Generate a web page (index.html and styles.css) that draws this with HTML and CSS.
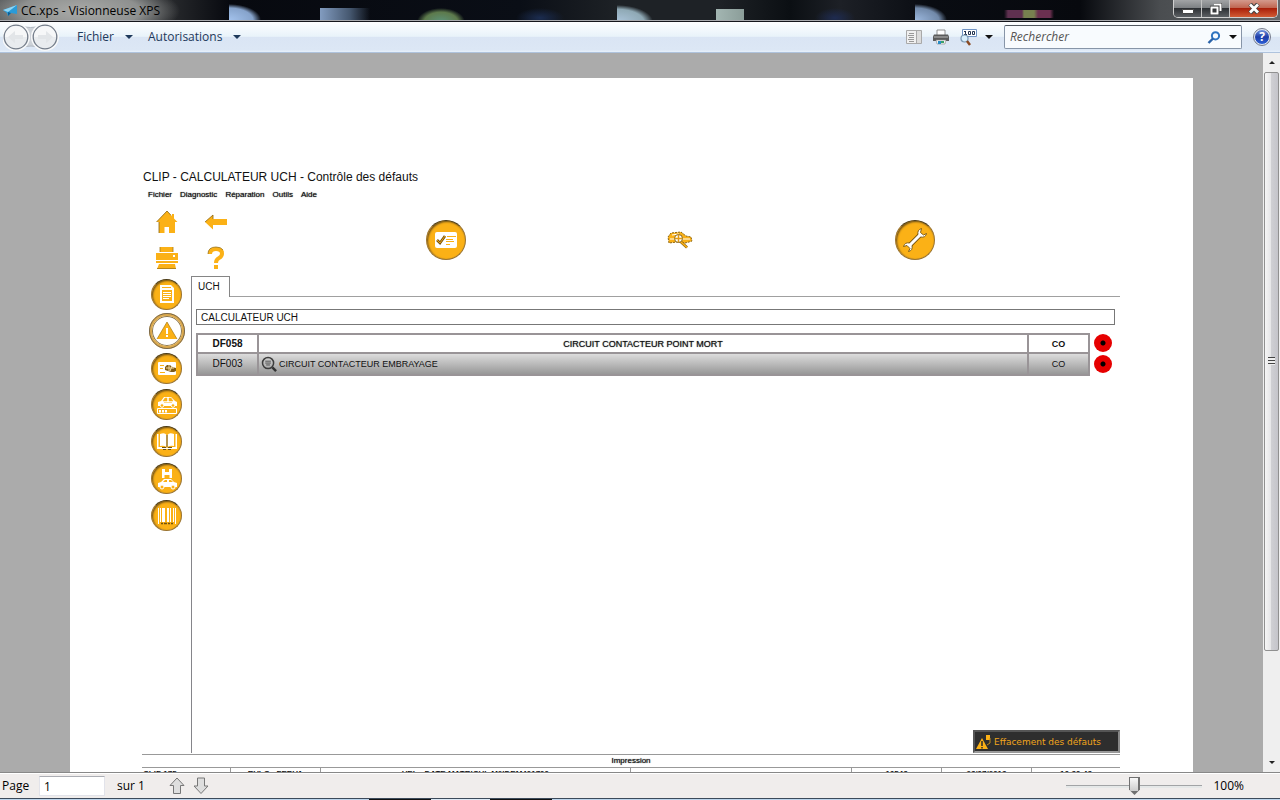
FILE: index.html
```html
<!DOCTYPE html>
<html lang="fr">
<head>
<meta charset="utf-8">
<title>CC.xps - Visionneuse XPS</title>
<link rel="stylesheet" href="styles.css">
</head>
<body>
<div class="window">
  <header class="titlebar">
    <svg class="app-icon" width="14" height="12" viewBox="0 0 14 12"><path d="M0 5 14 0v9L8 8l-3 3-1-3z" fill="#2a9bd8"/><path d="M0 5 14 0 5 7z" fill="#8fd6f5"/><path d="M5 7l3 1-3 3z" fill="#0b5f96"/></svg>
    <h1 class="title">CC.xps - Visionneuse XPS</h1>
    <div class="caption-buttons">
      <button class="cap" aria-label="Réduire"><svg width="12" height="12" viewBox="0 0 12 12"><path d="M.5 6.500h11v4H.5z" fill="#fff" stroke="#444"/></svg></button>
      <button class="cap" aria-label="Restaurer"><svg width="12" height="12" viewBox="0 0 12 12"><path d="M4 1.500h6.500V8M1.500 4.500h6v6h-6z" fill="none" stroke="#333" stroke-width="3.500"/><path d="M4 1.500h6.500V8M1.500 4.500h6v6h-6z" fill="none" stroke="#fff" stroke-width="2"/></svg></button>
      <button class="cap cap-close" aria-label="Fermer"><svg width="12" height="11" viewBox="0 0 12 11"><path d="M2 1l8 9M10 1 2 10" stroke="#444" stroke-width="4.500"/><path d="M2 1.500l8 8M10 1.500l-8 8" stroke="#fff" stroke-width="2.800"/></svg></button>
    </div>
  </header>

  <nav class="toolbar">
    <div class="history">
      <svg width="56" height="28" viewBox="0 0 56 28"><path d="M13 2q14 5 30 0v24q-15-6-30 0z" fill="#cdd2d8" stroke="#b1b8c1"/><g fill="#eceff2" stroke="#f8f9fa" stroke-width="3"><circle cx="13" cy="14" r="12.500"/><circle cx="42" cy="14" r="12.500"/></g><g fill="#e9ecef" stroke="#737c89" stroke-width="1.300"><circle cx="13" cy="14" r="11.800"/><circle cx="42" cy="14" r="11.800"/></g><path d="M2 14a11 11 0 0 1 22 0zM31 14a11 11 0 0 1 22 0z" fill="#f6f7f8"/><path d="M5 14l7-6v4h8v4h-8v4zM50 14l-7-6v4h-8v4h8v4z" fill="#e2e5e8"/></svg>
    </div>
    <button class="menu-btn">Fichier <span class="caret"></span></button>
    <button class="menu-btn">Autorisations <span class="caret"></span></button>
    <div class="tools">
      <button class="tool" aria-label="Plan"><svg width="16" height="16" viewBox="0 0 16 16"><path d="M.5 1.500h15v13H.5z" fill="#f0f0f0" stroke="#a9a9a9"/><path d="M10.500 2v12" stroke="#a9a9a9"/><path d="M11 2h4v12h-4z" fill="#dcdcdc"/><path d="M3 4.500h5M2 6.500h6M3 8.500h5M2 10.500h6M3 12.500h5" stroke="#999"/></svg></button>
      <button class="tool" aria-label="Imprimer"><svg width="16" height="16" viewBox="0 0 16 16"><path d="M4 1h8v6H4z" fill="#fff" stroke="#777" stroke-width=".8"/><path d="M1 5.500h14l1 2V12H0V7.500z" fill="#5b5b5b"/><path d="M1 8h14" stroke="#bcbcbc"/><path d="M3 11h10l-1 4H4z" fill="#f5f5f5" stroke="#888" stroke-width=".6"/><path d="M5 12h3v3H5z" fill="#278dc8"/><path d="M8 12h3v2H8z" fill="#3ba06b"/></svg></button>
      <button class="tool tool-zoom" aria-label="Zoom 100"><svg width="17" height="18" viewBox="0 0 17 18"><path d="M2.500 1.500h14v7h-14z" fill="#fff" stroke="#6f93c4"/><g fill="none" stroke="#24344f"><path d="M5.500 3v4M4 3.500h1M4 6.500h3"/><path d="M8.500 3.500h2v3h-2zM12.500 3.500h2v3h-2z"/></g><circle cx="4.500" cy="10.500" r="3.500" fill="#d6edfb" stroke="#7b99b3" stroke-width="1.200"/><path d="M7 13l3 4" stroke="#8a4a22" stroke-width="2.500"/></svg><span class="caret dark"></span></button>
      <div class="search">
        <input class="search-input" type="text" placeholder="Rechercher" aria-label="Rechercher">
        <button class="tool" aria-label="Lancer la recherche"><svg width="14" height="13" viewBox="0 0 14 13"><circle cx="8.500" cy="4.800" r="3.600" fill="none" stroke="#2f74c0" stroke-width="2"/><path d="M6 7.500 1.500 12" stroke="#2a62a8" stroke-width="2.400"/></svg></button>
        <button class="tool" aria-label="Options de recherche"><span class="caret dark"></span></button>
      </div>
      <button class="help" aria-label="Aide">?</button>
    </div>
  </nav>

  <main class="viewer">
    <div class="canvas">
      <article class="sheet">
        <h2 class="sheet-title">CLIP - CALCULATEUR UCH - Contrôle des défauts</h2>
        <nav class="sheet-menu"><span>Fichier</span><span>Diagnostic</span><span>Réparation</span><span>Outils</span><span>Aide</span></nav>

        <div class="top-row">
          <div class="quick">
            <svg width="24" height="24" viewBox="0 0 24 24"><path d="M12 1 1.500 12H4v11h5.500v-6h4.500v6h6V12h2.500L19 8.500V4h-2v2.300z" fill="#fbb116"/><path d="M1.500 12 12 1l4 4.300M4 12v11" stroke="#8a650e" stroke-width=".8" fill="none"/></svg>
            <svg width="24" height="24" viewBox="0 0 24 24"><path d="M1 12l8-7v4h14v6H9v4.500z" fill="#fbb116"/><path d="M1 12l8-7v4" stroke="#8a650e" stroke-width=".8" fill="none"/></svg>
            <svg width="24" height="24" viewBox="0 0 24 24"><path d="M5 1h13v5H5zM1 7h22v10H1zM4 18h16l1 5H2z" fill="#fbb116"/><path d="M1 14.500h22" stroke="#fff"/><path d="M5 6V1M18 1v5M2 22.500h19" stroke="#a67a17" stroke-width=".8"/><path d="M18 9h2v2h-2z" fill="#fff"/></svg>
            <svg width="24" height="24" viewBox="0 0 24 24"><path d="M6 8q0-5 6-5t6 4.500q0 3-3 4.500t-3 5" fill="none" stroke="#fbb116" stroke-width="4"/><path d="M10 19h4v4h-4z" fill="#fbb116"/><path d="M4 8q0-7 8-7 5 0 7 3" fill="none" stroke="#8a650e" stroke-width=".7"/></svg>
          </div>
          <div class="steps">
            <div class="step"><span class="disc disc-lg"><svg width="24" height="20" viewBox="0 0 24 20"><rect x="1" y="2" width="22" height="16" rx="2" fill="#fff"/><path d="M3 10l3 3 5-7" fill="none" stroke="#77530a" stroke-width="2.600"/><path d="M3 10l3 3 5-7" fill="none" stroke="#e7a013" stroke-width="1"/><path d="M13 6.500h9M12 9.500h7M12 11.500h8M12 14.500h4" stroke="#fbb116"/></svg></span></div>
            <div class="step"><svg width="26" height="18" viewBox="0 0 26 18"><path d="M1 6l3-4 10-1 5 4 5 1 1 4-3 1-4 1-8-1-8 1z" fill="#fbb116" stroke="#8b6512" stroke-dasharray="2 1"/><path d="M5 4l7-1M3 8h20" stroke="#fff"/><circle cx="11.500" cy="7.500" r="4" fill="#fff" stroke="#8b6512"/><path d="M8 7.500h7M11.500 4v7" stroke="#e39b12" stroke-width="1.500"/><path d="M14 11l6 5.500" stroke="#8b6512" stroke-width="2.800"/><path d="M14 11l6 5.500" stroke="#fbb116" stroke-width="1.600"/></svg></div>
            <div class="step"><span class="disc disc-lg"><svg width="28" height="28" viewBox="0 0 28 28"><path d="M8.500 19.500 19.500 8.500" stroke="#75530d" stroke-width="4.600"/><path d="M20.500 2.500q-4.500 1.500-3.500 6l2.500 2.500q5 1 6-3.500L22.500 9 19.500 6.500zM2.500 20.500q1.500-4.500 6-3.500l2.500 2.500q1 5-3.500 6L9 22.500 6 19.500z" fill="#fff" stroke="#75530d" stroke-width=".9"/><path d="M8.500 19.500 19.500 8.500" stroke="#fff" stroke-width="3"/></svg></span></div>
          </div>
        </div>

        <div class="work">
          <div class="sidebar">
            <span class="disc"><svg width="22" height="22" viewBox="0 0 22 22"><path d="M4 2h11l3 3v15H4zM6 7v11h10V7z" fill="#fff" fill-rule="evenodd"/><path d="M6 4.500h9" stroke="#fbb116"/><path d="M7 9.500h8M7 11.500h8M7 13.500h8M7 15.500h6" stroke="#fff"/></svg></span>
            <span class="disc disc-open"><svg width="22" height="22" viewBox="0 0 22 22"><path d="M11 2 21 19H1z" fill="#fbb116"/><path d="M1 19 11 2l10 17" stroke="#a6780e" stroke-width=".7" fill="none"/><path d="M10 8h2v6h-2zM10 15h2v2h-2z" fill="#fff"/></svg></span>
            <span class="disc"><svg width="22" height="22" viewBox="0 0 22 22"><rect x="2" y="5" width="18" height="13" rx="1" fill="#fff"/><path d="M4 8.500h4M4 11.500h3M4 15.500h5" stroke="#fbb116"/><path d="M9 10l2-2h3l2 2 4 1v3l-2 1h-3l-6-2z" fill="#7d5b18"/><path d="M10 11h8M13 8v6M16 9l-2 5" stroke="#f5d99a"/></svg></span>
            <span class="disc"><svg width="22" height="22" viewBox="0 0 22 22"><path d="M2 8l3-1 3-4h7l4 4 2 1v4H2z" fill="#fff"/><path d="M7 7l2-3h2v3zM13 4h2l2 3h-4zM8 8.500h8" fill="#fbb116" stroke="#fbb116" stroke-width=".5"/><circle cx="6" cy="11.500" r="1.800" fill="#fbb116" stroke="#fff"/><circle cx="17" cy="11.500" r="1.800" fill="#fbb116" stroke="#fff"/><path d="M1.500 14.500h19v5h-19z" fill="none" stroke="#fff"/><path d="M3 16h2v2.500H3zM6 16h2v2.500H6zM9 16h2v2.500H9z" fill="#fff"/></svg></span>
            <span class="disc"><svg width="22" height="22" viewBox="0 0 22 22"><path d="M1 3h1.500v13H9l2 1 2-1h6.500V3H21v15H1z" fill="#fff"/><path d="M4 3q5-2 6.500 1v12Q8 14 4 15zM18 3q-5-2-6.500 1v12q2.500-2 6.500-1z" fill="#fff"/><path d="M6 16.500h4M12 16.500h4M7 18.500h3M12 18.500h3M11 4v12" stroke="#6d5113"/></svg></span>
            <span class="disc"><svg width="22" height="22" viewBox="0 0 22 22"><path d="M6 1h10v9H6z" fill="#fff"/><path d="M9 1h4v3H9zM8.500 7h5v3h-5z" fill="#fbb116"/><path d="M2 15l3-1 3-3h7l3 3 3 1v4H2z" fill="#fff"/><path d="M7 14l2-2h2v2zM13 12h2l2 2h-4z" fill="#fbb116"/><circle cx="6" cy="19" r="2" fill="#fbb116" stroke="#fff"/><circle cx="17" cy="19" r="2" fill="#fbb116" stroke="#fff"/></svg></span>
            <span class="disc"><svg width="22" height="22" viewBox="0 0 22 22"><path d="M2.500 3v16M4.500 3v14M14.500 3v14M17.500 3v14M19.500 3v16" stroke="#fff"/><path d="M6 3h3v14H6zM11 3h2v14h-2z" fill="#fff"/><path d="M5 18.500h2M8 18.500h3M12 18.500h2M15 18.500h2" stroke="#70520f" stroke-width="1.500"/></svg></span>
          </div>
          <section class="panel">
            <div class="tabs"><button class="tab">UCH</button></div>
            <div class="panel-body">
              <div class="ecu-name">CALCULATEUR UCH</div>
              <table class="faults">
                <tr class="row-active"><td class="code">DF058</td><td class="label">CIRCUIT CONTACTEUR POINT MORT</td><td class="state">CO</td><td class="flag"><span class="dot"></span></td></tr>
                <tr class="row-grey"><td class="code">DF003</td><td class="label"><div class="with-icon"><svg width="16" height="16" viewBox="0 0 17 17"><circle cx="7.500" cy="7.500" r="5.900" fill="none" stroke="#3d3d3d" stroke-width="1.600"/><path d="M12 12l4 4" stroke="#333" stroke-width="2.600"/><path d="M4.500 5.500h6M4.500 7.500h6M5.500 9.500h4" stroke="#333" stroke-width=".8"/></svg>CIRCUIT CONTACTEUR EMBRAYAGE</div></td><td class="state">CO</td><td class="flag"><span class="dot"></span></td></tr>
              </table>
            </div>
            <button class="clear-btn"><svg width="16" height="16" viewBox="0 0 16 16"><path d="M6 4 12 15H0z" fill="#fbb116"/><path d="M6 7v5M6 13v1.500" stroke="#2b2b2b" stroke-width="1.500"/><path d="M10 1h4v5h-4z" fill="#fbb116"/><path d="M14 4v5l-3 2" stroke="#c48c18" fill="none"/></svg>Effacement des défauts</button>
          </section>
        </div>

        <footer class="print">
          <div class="print-title">Impression</div>
          <div class="print-row"><span>CLIP 175</span><span>RVLC : FEBVA</span><span>VEL : DATE MATRICUL M2IDEM401700</span><span></span><span>16548</span><span>28/07/2013</span><span>16:30:48</span></div>
        </footer>
      </article>
    </div>
    <div class="scrollbar">
      <button class="scroll-end" aria-label="Haut"><span class="arrow-up"></span></button>
      <div class="track"><div class="thumb"><span class="grip"></span></div></div>
      <button class="scroll-end" aria-label="Bas"><span class="arrow-down"></span></button>
    </div>
  </main>

  <footer class="status">
    <label class="page-label" for="page">Page</label>
    <input class="page-input" id="page" type="text" value="1">
    <span class="page-count">sur 1</span>
    <div class="page-nav">
      <button class="tool" aria-label="Page précédente"><svg width="16" height="18" viewBox="0 0 16 18"><path d="M8 1 15 8.500h-3.500V16.500h-7V8.500H1z" fill="#dedede" stroke="#777"/></svg></button>
      <button class="tool" aria-label="Page suivante"><svg width="16" height="18" viewBox="0 0 16 18"><path d="M8 16.500 15 9h-3.500V1h-7v8H1z" fill="#dedede" stroke="#777"/></svg></button>
    </div>
    <input class="zoom-range" type="range" min="0" max="100" value="50" aria-label="Zoom">
    <span class="zoom-value">100%</span>
  </footer>
  <div class="taskbar"></div>
</div>
</body>
</html>
```

FILE: styles.css
```css
* { box-sizing: border-box; }

body {
  margin: 0;
  font: 12px/16px "Open Sans", "Noto Sans", sans-serif;
  color: #000;
}

button {
  margin: 0;
  padding: 0;
  border: 0;
  background: none;
  font: inherit;
  color: inherit;
}

svg { display: block; flex: none; }

.window {
  display: flex;
  flex-direction: column;
  height: 100vh;
  overflow: hidden;
}

/* Title bar */
.titlebar {
  display: flex;
  align-items: flex-start;
  flex: none;
  height: 22px;
  padding-left: 3px;
  border-bottom: 1px solid #15161c;
  box-shadow: inset 0 -1px #a9aaae;
  background:
    radial-gradient(ellipse 100px 30px at 80px 11px, #a9aaa8 0, #8e908f 60%, transparent 100%),
    radial-gradient(ellipse 32px 16px at 0 20px, #a3c2ec 0, #86a3cb 75%, transparent 100%) 229px 0 / 34px 22px no-repeat,
    linear-gradient(90deg, #829cc0, #45576f 60%, transparent) 320px 8px / 50px 13px no-repeat,
    radial-gradient(ellipse 24px 14px at 441px 22px, #5c927a 0, #5d7a4c 70%, transparent 100%),
    radial-gradient(ellipse 24px 10px at 540px 18px, #1b2c50 0, transparent 100%),
    radial-gradient(ellipse 36px 17px at 0 22px, #acc5db 0, #8fa9b5 75%, transparent 100%) 617px 0 / 40px 22px no-repeat,
    linear-gradient(90deg, #a3b6b2, #8b9d99) 716px 9px / 28px 12px no-repeat,
    radial-gradient(ellipse 20px 10px at 835px 18px, #1e2b50 0, transparent 100%),
    radial-gradient(ellipse 32px 16px at 0 20px, #9bb7dd 0, #7189a9 75%, transparent 100%) 915px 0 / 34px 22px no-repeat,
    linear-gradient(90deg, transparent, #5f3050 4px 18px, #77804f 20px 30px, #6b3050 34px 46px, transparent) 1004px 10px / 50px 8px no-repeat,
    linear-gradient(90deg, #4c5052 0, #27292c 170px, #07090f 230px, #0a0e16 520px, #1e2226 620px, #1e2226 720px, #0b0f13 790px, #1d2026 840px, #090c12 930px, #07090e 1080px, #4a4d50 1160px, #63676a 100%);
}

.app-icon { margin-top: 5px; }

.title {
  margin: 2px 0 0 4px;
  font-size: 12px;
  line-height: 18px;
  font-weight: 400;
}

.caption-buttons {
  display: flex;
  margin: 0 2px 0 auto;
  height: 18px;
  border: 1px solid #d0d0d0;
  border-top: 0;
  border-radius: 0 0 5px 5px;
  overflow: hidden;
}

.cap {
  display: flex;
  align-items: center;
  justify-content: center;
  width: 28px;
  border-right: 1px solid #c4c4c4;
  background: linear-gradient(#a2a4a6 0, #7e8184 45%, #2d3034 50%, #5c6064 100%);
}

.cap-close {
  width: 47px;
  border-right: 0;
  background: linear-gradient(#d49a8c 0, #c06752 45%, #a9200a 50%, #d15b34 100%);
}

/* Command bar */
.toolbar {
  display: flex;
  align-items: center;
  flex: none;
  height: 31px;
  padding: 0 10px 0 3px;
  border-bottom: 1px solid #afc3dd;
  background: linear-gradient(#fdfeff 0, #e9f3fa 48%, #dae5f4 50%, #dce7f5 92%, #e7f1fc 100%);
  color: #1e395b;
}

.history { margin-right: 18px; }

.menu-btn {
  display: flex;
  align-items: center;
  gap: 11px;
  margin-right: 15px;
}

.caret {
  display: block;
  border: 4px solid transparent;
  border-top-color: #1e395b;
  border-bottom: 0;
}

.caret.dark { border-top-color: #111; }

.tools {
  display: flex;
  align-items: center;
  gap: 11px;
  margin-left: auto;
}

.tool-zoom {
  display: flex;
  align-items: center;
  gap: 8px;
}

.search {
  display: flex;
  align-items: center;
  gap: 8px;
  width: 238px;
  height: 24px;
  padding: 0 4px 0 5px;
  border: 1px solid #8795a8;
  border-top-color: #50565e;
  border-radius: 2px;
  background: #f8fbfe;
}

.search-input {
  flex: 1;
  min-width: 0;
  padding: 0;
  border: 0;
  background: none;
  font: italic 12px/18px "Open Sans", "Noto Sans", sans-serif;
}

.search-input::placeholder { color: #555; }

.help {
  width: 16px;
  height: 16px;
  margin-left: 1px;
  border: 1px solid #dfe5f2;
  border-radius: 50%;
  outline: 1px solid #767c8c;
  background: linear-gradient(#7193dd 0, #1d3da8 50%, #2c5fd6 100%);
  color: #fff;
  font-weight: 700;
  line-height: 14px;
}

/* Document area */
.viewer {
  display: flex;
  flex: 1;
  min-height: 0;
  border-bottom: 1px solid #888;
  background: #ababab;
}

.canvas {
  flex: 1;
  min-width: 0;
  padding: 25px 70px 0;
  overflow: hidden;
}

.sheet {
  min-height: 794px;
  padding: 91px 73px 0 72px;
  background: #fff;
  font-family: "Liberation Sans", Arial, sans-serif;
  color: #111;
}

.sheet-title {
  margin: 0 1px;
  font-size: 12px;
  line-height: 17px;
  font-weight: 400;
}

.sheet-menu {
  display: flex;
  gap: 8px;
  padding: 4px 6px 0;
  font-size: 8px;
  line-height: 10px;
  text-shadow: 0 0 1px #333;
}

.top-row {
  display: flex;
  padding-top: 4px;
  height: 76px;
}

.quick {
  display: grid;
  grid-template-columns: 49px 49px;
  grid-template-rows: 36px 36px;
  place-items: center;
}

.steps {
  display: flex;
  flex: 1;
  align-items: center;
  padding: 0 88px 0 89px;
}

.step {
  display: flex;
  flex: 1;
  justify-content: center;
}

.disc {
  display: flex;
  align-items: center;
  justify-content: center;
  width: 31px;
  height: 31px;
  border: 1px solid #9a7432;
  border-top-color: #493b1b;
  border-radius: 50%;
  background: #fbb116;
  box-shadow: inset 1px 1px 2px #6e501a;
}

.disc-lg { width: 40px; height: 40px; }

.disc-open {
  width: 36px;
  height: 36px;
  border: 3px solid #dcaa4e;
  outline: 1px solid #77674c;
  outline-offset: -1px;
  background: #fff;
  box-shadow: inset 0 0 0 1px #8a744a;
}

.work { display: flex; min-height: 477px; }

.sidebar {
  display: grid;
  grid-auto-rows: 1fr;
  place-items: center;
  width: 49px;
  height: 258px;
}

.panel {
  display: flex;
  flex: 1;
  flex-direction: column;
  border-left: 1px solid #85858a;
}

.tabs {
  display: flex;
  height: 21px;
}

.tabs::after {
  content: "";
  flex: 1;
  border-bottom: 1px solid #a0a0a0;
}

.tab {
  width: 38px;
  padding-left: 6px;
  border: 1px solid #858585;
  border-width: 1px 1px 0 0;
  font-size: 10px;
  line-height: 18px;
  text-align: left;
}

.panel-body { padding: 12px 5px 0 4px; }

.ecu-name {
  height: 16px;
  padding-left: 4px;
  border: 1px solid #777;
  font-size: 10px;
  line-height: 15px;
}

.faults {
  width: 100%;
  margin-top: 8px;
  border-collapse: collapse;
  table-layout: fixed;
  font-size: 9px;
  line-height: 12px;
}

.faults td {
  padding: 0;
  border: 2px solid #999497;
  text-align: center;
}

.faults .code { width: 61px; font-size: 10px; }
.faults .state { width: 61px; }
.faults .flag { width: 25px; border: 0; background: none; }

.row-active .code, .row-active .state { font-weight: 700; }
.row-active .label { text-shadow: 0 0 1px #444; }
.row-grey { height: 22px; }
.row-grey td { background: linear-gradient(#dcdcdc, #989898); }

.with-icon {
  display: flex;
  align-items: center;
  gap: 2px;
  padding-left: 2px;
}

.dot {
  display: block;
  width: 18px;
  height: 18px;
  margin: 0 0 1px 4px;
  border-radius: 50%;
  background: radial-gradient(circle, #000 0 2px, #e60000 3px);
}

.clear-btn {
  display: flex;
  align-items: center;
  gap: 2px;
  width: 147px;
  height: 23px;
  margin: auto 0 0 auto;
  padding-left: 1px;
  border: 2px solid #555;
  border-bottom-color: #999;
  border-right-color: #888;
  background: #2e2e2e;
  color: #f0a51c;
  font: 9px/16px "DejaVu Sans", sans-serif;
}

.print {
  margin-top: 1px;
  border-top: 1px solid #999;
  font-size: 8px;
  line-height: 12px;
}

.print-title {
  border-bottom: 1px solid #999;
  text-align: center;
  text-shadow: 0 0 1px #333;
}

.print-row {
  display: grid;
  grid-template-columns: 89fr 90fr 310fr 221fr 90fr 90fr 88fr;
  text-align: center;
  font-weight: 700;
}

.print-row span {
  padding-top: 1px;
  border-right: 1px solid #999;
  line-height: 10px;
}

.print-row span:first-child { text-align: left; padding-left: 1px; }
.print-row span:last-child { border-right: 0; }

/* Scroll bar */
.scrollbar {
  display: flex;
  flex: none;
  flex-direction: column;
  width: 17px;
  padding-left: 1px;
  background: #efefef;
}

.scroll-end {
  display: flex;
  align-items: center;
  justify-content: center;
  height: 19px;
}

.arrow-up, .arrow-down { border: 3px solid transparent; }
.arrow-up { border-top: 0; border-bottom-color: #222; }
.arrow-down { border-bottom: 0; border-top-color: #222; }

.track { flex: 1; }

.thumb {
  display: flex;
  align-items: center;
  justify-content: center;
  width: 15px;
  height: 85%;
  border: 1px solid #909090;
  border-radius: 2px;
  background: linear-gradient(90deg, #f6f6f6 0, #e6e6e8 45%, #cfcfd3 50%, #c4c4ca 100%);
}

.grip {
  width: 7px;
  height: 8px;
  background: repeating-linear-gradient(#444 0 1px, #eee 1px 3px);
}

/* Status bar */
.status {
  display: flex;
  align-items: center;
  flex: none;
  height: 25px;
  padding: 0 36px 0 2px;
  border-top: 1px solid #fff;
  background: #f0edec;
}

.page-label { width: 37px; }

.page-input {
  width: 66px;
  height: 20px;
  padding: 0 4px;
  border: 1px solid #e2e3ea;
  border-top-color: #abadb3;
  font: inherit;
}

.page-count { margin-left: 12px; }

.page-nav {
  display: flex;
  gap: 8px;
  margin-left: 24px;
}

.zoom-range {
  width: 136px;
  height: 20px;
  margin: 0 11px 0 auto;
  appearance: none;
  background: linear-gradient(#a2a4a6 0 1px, #e5e8e8 1px) center / 100% 3px no-repeat;
}

.zoom-range::-webkit-slider-thumb {
  appearance: none;
  width: 11px;
  height: 18px;
  background:
    linear-gradient(#f8f8f8, #ccc) center 1px / 8px 13px no-repeat,
    #707070;
  clip-path: polygon(0 0, 100% 0, 100% 70%, 50% 100%, 0 70%);
}

.taskbar {
  flex: none;
  height: 2px;
  border-top: 1px solid #3c4a5a;
  background: linear-gradient(90deg, #bcd5ec 0 369px, #111 369px 431px, #dce9f5 431px 490px, #111 490px 552px, #bcd5ec 552px);
}
```
